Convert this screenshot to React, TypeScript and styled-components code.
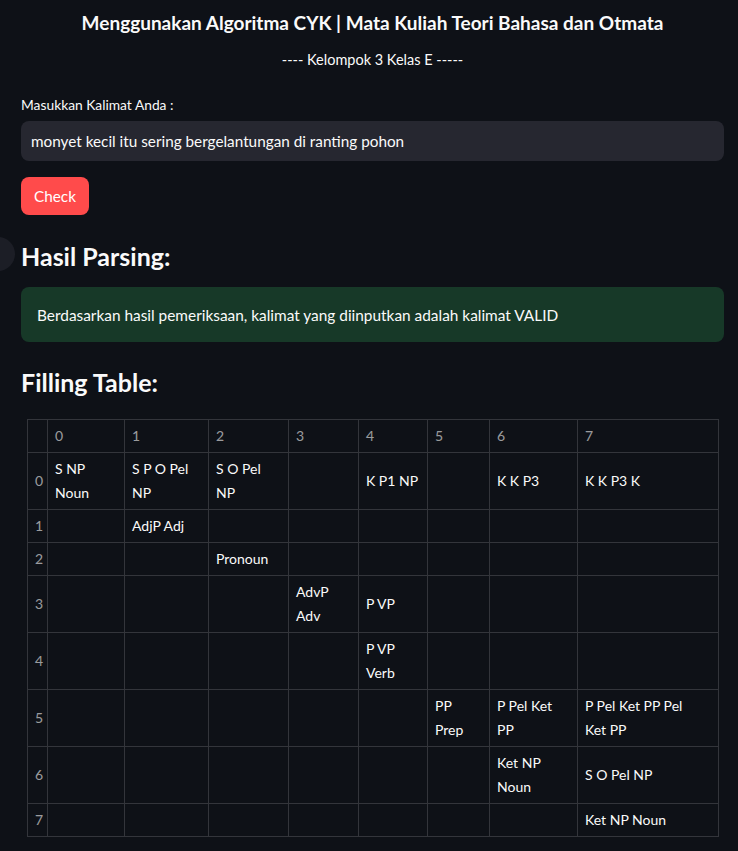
import React from "react";
import styled, { createGlobalStyle } from "styled-components";

const Global = createGlobalStyle`
  html, body { margin: 0; padding: 0; background: #0e1117; }
  body { font-family: Lato, "Noto Sans", sans-serif; color: #fafafa; }
  * { box-sizing: border-box; }
`;

const Page = styled.div`
  width: 738px;
  min-height: 851px;
  background: #0e1117;
  padding: 0 14px 0 21px;
  position: relative;
  overflow: hidden;
`;

const Title = styled.h3`
  margin: 0;
  padding-top: 11px;
  text-align: center;
  font-size: 19px;
  font-weight: 700;
  line-height: 24px;
  color: #fafafa;
`;

const Subtitle = styled.p`
  margin: 0;
  padding-top: 15px;
  text-align: center;
  font-size: 14.5px;
  line-height: 20px;
`;

const Label = styled.label`
  display: block;
  margin-top: 25px;
  font-size: 13.8px;
  line-height: 20px;
`;

const Input = styled.div`
  margin-top: 6px;
  height: 40px;
  border-radius: 8px;
  background: #262730;
  display: flex;
  align-items: center;
  padding: 0 10px;
  font-size: 15.3px;
`;

const Button = styled.button`
  margin-top: 16px;
  height: 38px;
  padding: 0 13px;
  border: none;
  border-radius: 8px;
  background: #ff4b4b;
  color: #fff;
  font-family: inherit;
  font-size: 15.3px;
  display: block;
`;

const HeadingWrap = styled.div`
  position: relative;
  margin-top: 28px;
`;

const Anchor = styled.span`
  position: absolute;
  left: -40px;
  top: -6px;
  width: 34px;
  height: 34px;
  border-radius: 50%;
  background: #1c1e26;
`;

const Heading = styled.h2`
  margin: 0;
  font-size: 25px;
  font-weight: 700;
  line-height: 26px;
`;

const Success = styled.div`
  margin-top: 18px;
  height: 55px;
  border-radius: 8px;
  background: #173928;
  display: flex;
  align-items: center;
  padding: 0 16px;
  font-size: 15.4px;
`;

const TableHeading = styled(Heading)`
  margin-top: 27px;
`;

const Table = styled.table`
  margin-top: 24px;
  margin-left: 6px;
  border-collapse: collapse;
  table-layout: fixed;
  width: 691px;
  font-size: 14px;
  line-height: 24px;
`;

const Th = styled.th<{ $w?: number }>`
  border: 1px solid #33353b;
  padding: 4px 7px;
  text-align: left;
  vertical-align: middle;
  font-weight: 400;
  color: rgba(250, 250, 250, 0.6);
  ${(p) => (p.$w ? `width: ${p.$w}px;` : "")}
`;

const Td = styled.td<{ $wide?: boolean }>`
  border: 1px solid #33353b;
  padding: 4px ${(p) => (p.$wide ? "24px" : "7px")} 4px 7px;
  vertical-align: middle;
  color: #fafafa;
`;

const widths = [20, 77, 84, 80, 70, 69, 62, 88, 141];

const data: string[][] = [
  ["S NP Noun", "S P O Pel NP", "S O Pel NP", "", "K P1 NP", "", "K K P3", "K K P3 K"],
  ["", "AdjP Adj", "", "", "", "", "", ""],
  ["", "", "Pronoun", "", "", "", "", ""],
  ["", "", "", "AdvP Adv", "P VP", "", "", ""],
  ["", "", "", "", "P VP Verb", "", "", ""],
  ["", "", "", "", "", "PP Prep", "P Pel Ket PP", "P Pel Ket PP Pel Ket PP"],
  ["", "", "", "", "", "", "Ket NP Noun", "S O Pel NP"],
  ["", "", "", "", "", "", "", "Ket NP Noun"],
];

export default function App() {
  return (
    <Page>
      <Global />
      <Title>Menggunakan Algoritma CYK | Mata Kuliah Teori Bahasa dan Otmata</Title>
      <Subtitle>---- Kelompok 3 Kelas E -----</Subtitle>
      <Label>Masukkan Kalimat Anda :</Label>
      <Input>monyet kecil itu sering bergelantungan di ranting pohon</Input>
      <Button>Check</Button>
      <HeadingWrap>
        <Anchor />
        <Heading>Hasil Parsing:</Heading>
      </HeadingWrap>
      <Success>Berdasarkan hasil pemeriksaan, kalimat yang diinputkan adalah kalimat VALID</Success>
      <TableHeading>Filling Table:</TableHeading>
      <Table>
        <thead>
          <tr>
            {widths.map((w, i) => (
              <Th key={i} $w={w}>{i === 0 ? "" : String(i - 1)}</Th>
            ))}
          </tr>
        </thead>
        <tbody>
          {data.map((row, r) => (
            <tr key={r}>
              <Th>{r}</Th>
              {row.map((c, i) => (
                <Td key={i} $wide={i === 7}>{c}</Td>
              ))}
            </tr>
          ))}
        </tbody>
      </Table>
    </Page>
  );
}
